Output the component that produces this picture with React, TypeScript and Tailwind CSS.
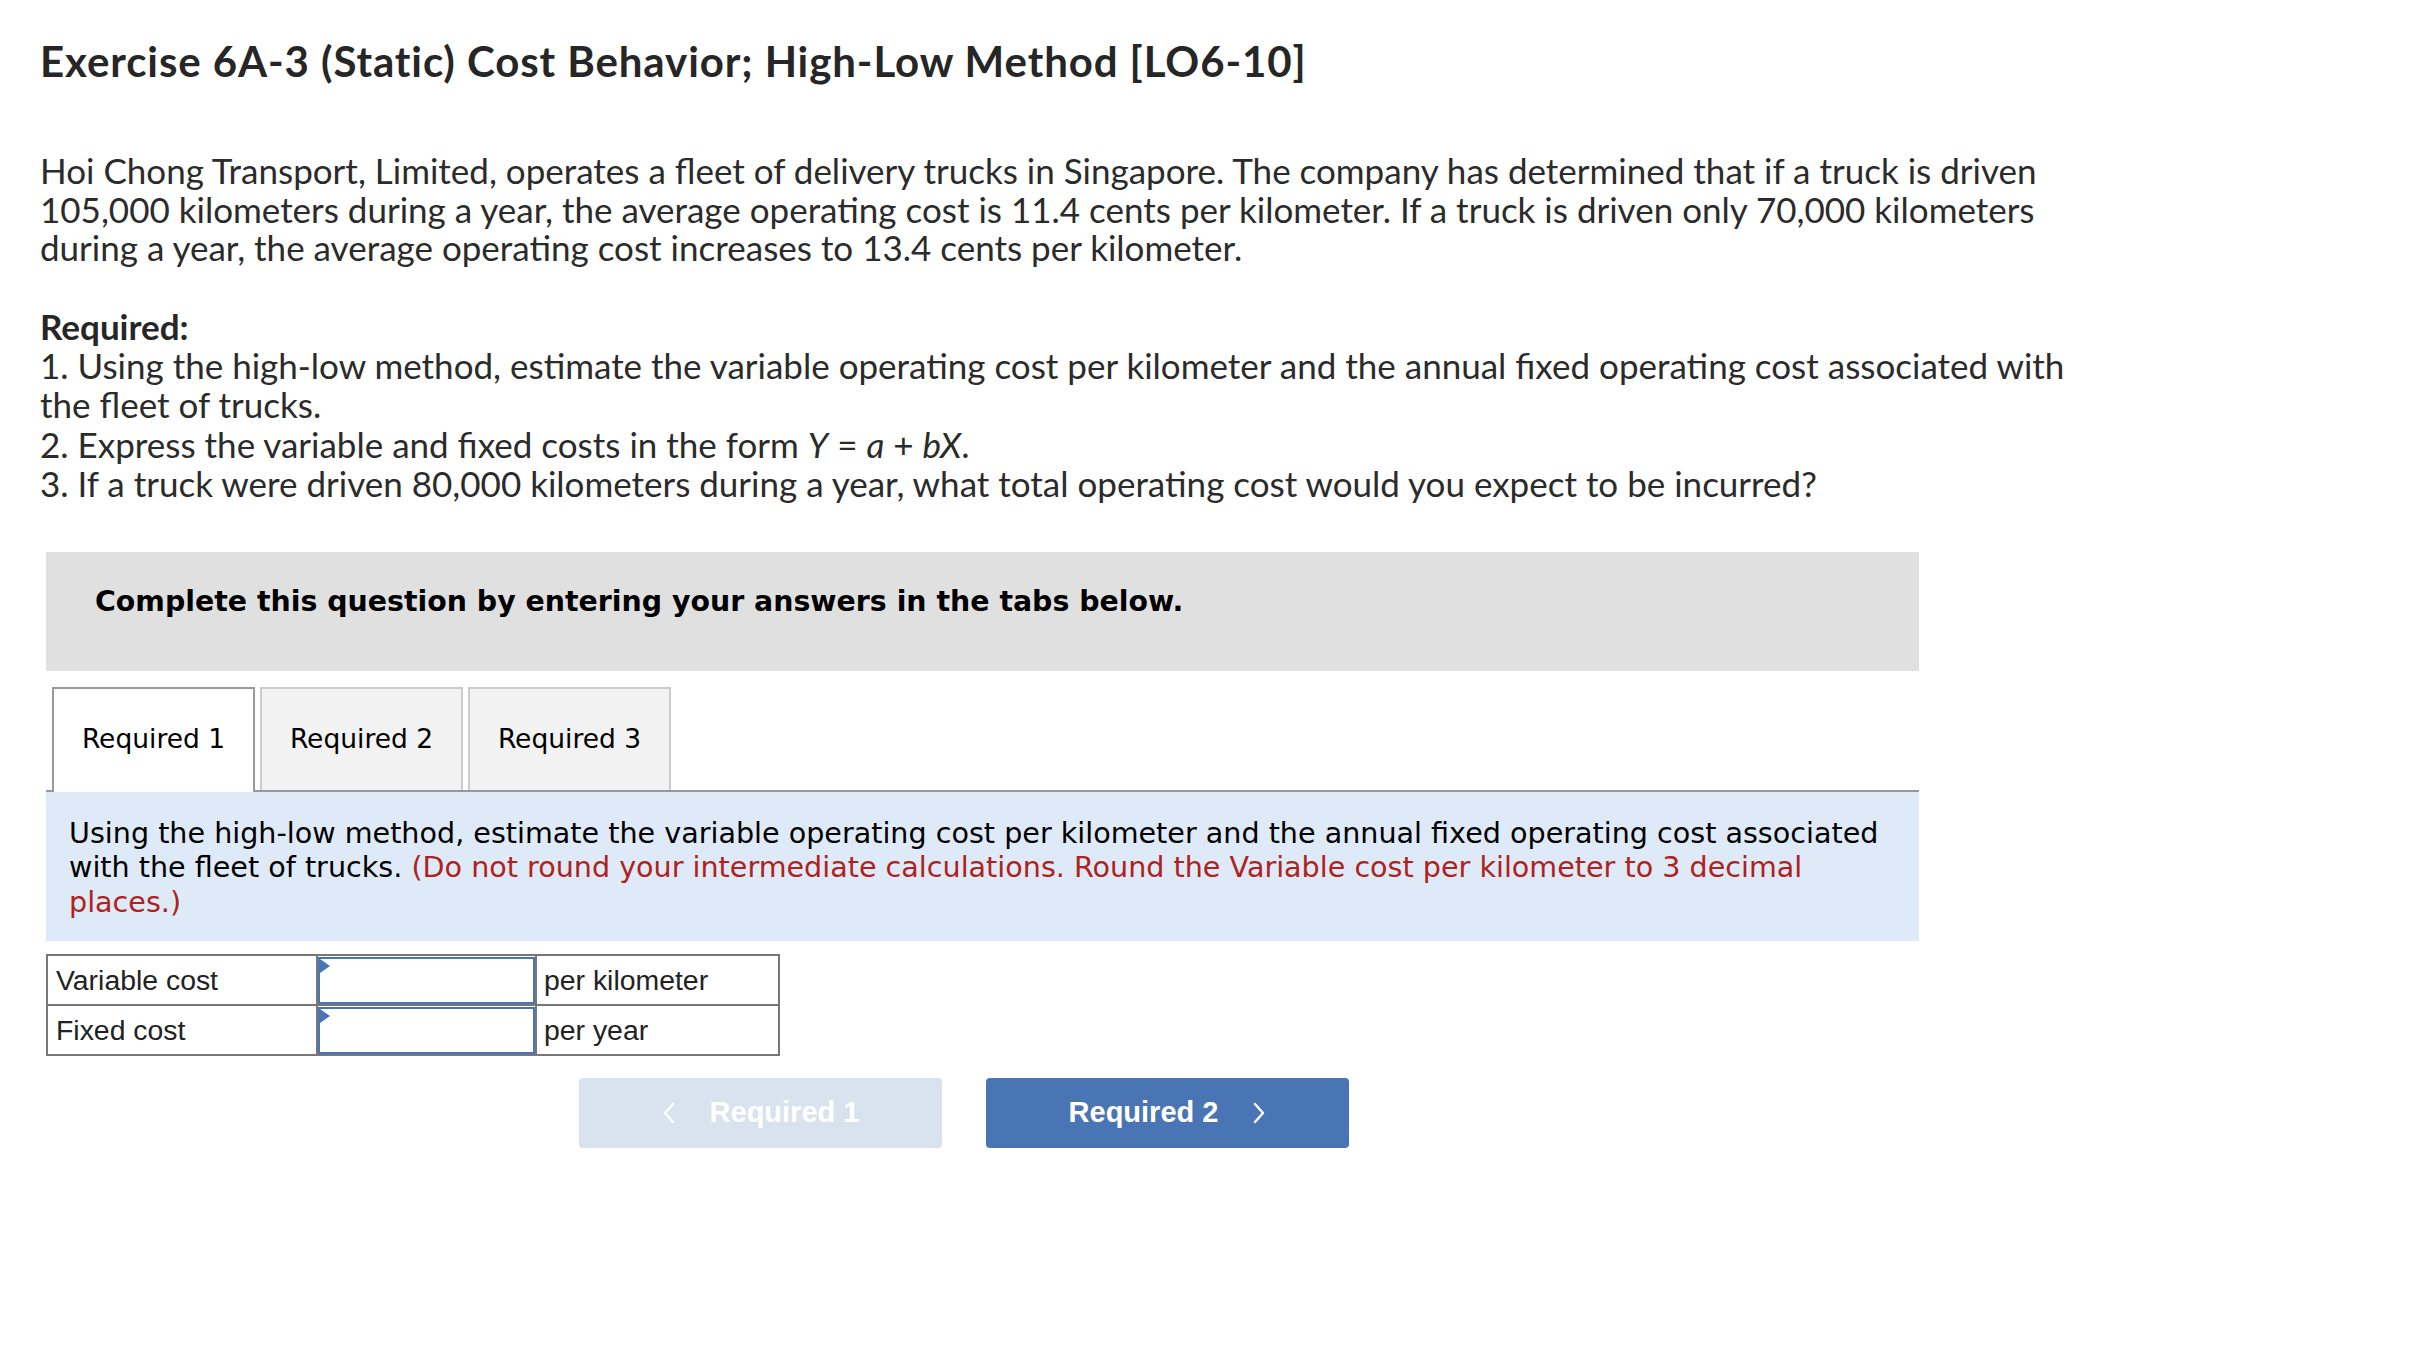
import React from 'react';

const sans = "font-['Lato','Noto_Sans',sans-serif]";

function Tab({ label, active }: { label: string; active?: boolean }) {
  if (active) {
    return (
      <div className="-mb-[2px] flex h-[105px] w-[203px] items-center justify-center border-2 border-b-0 border-[#999999] bg-white pb-[2px] font-['DejaVu_Sans',sans-serif] text-[26.5px] text-black">
        {label}
      </div>
    );
  }
  return (
    <div className="flex h-[103px] w-[203px] items-center justify-center border-2 border-b-0 border-[#cccccc] bg-[#f2f2f2] font-['DejaVu_Sans',sans-serif] text-[26.5px] text-black">
      {label}
    </div>
  );
}

function AnswerInput() {
  return (
    <div className="relative h-[47px] w-full border-2 border-[#4a75b5] bg-white">
      <div className="absolute left-0 top-0 h-0 w-0 border-y-[7px] border-l-[10px] border-y-transparent border-l-[#4a75b5]" />
    </div>
  );
}

function Chevron({ dir }: { dir: 'left' | 'right' }) {
  return (
    <svg width="14" height="22" viewBox="0 0 14 22" fill="none">
      <path
        d={dir === 'left' ? 'M11 2 L3 11 L11 20' : 'M3 2 L11 11 L3 20'}
        stroke="white"
        strokeWidth="2.4"
        strokeLinecap="round"
        strokeLinejoin="round"
      />
    </svg>
  );
}

export default function App() {
  return (
    <div className="min-h-screen bg-white pl-[40px] pt-[37px] text-[#2b2b2b]">
      <h1 className={`${sans} text-[42px] font-bold leading-[48px] tracking-[0.9px] text-[#262626]`}>
        Exercise 6A-3 (Static) Cost Behavior; High-Low Method [LO6-10]
      </h1>

      <p className={`${sans} mt-[66px] text-[35px] leading-[38.5px]`}>
        Hoi Chong Transport, Limited, operates a fleet of delivery trucks in Singapore. The company has determined that if a truck is driven
        <br />
        105,000 kilometers during a year, the average operating cost is 11.4 cents per kilometer. If a truck is driven only 70,000 kilometers
        <br />
        during a year, the average operating cost increases to 13.4 cents per kilometer.
      </p>

      <div className={`${sans} mt-[40px] text-[35px] leading-[39.4px]`}>
        <div className="font-bold text-[#262626]">Required:</div>
        <div>
          1. Using the high-low method, estimate the variable operating cost per kilometer and the annual fixed operating cost associated with
          <br />
          the fleet of trucks.
        </div>
        <div>
          2. Express the variable and fixed costs in the form <i>Y</i> = <i>a</i> + <i>bX</i>.
        </div>
        <div>3. If a truck were driven 80,000 kilometers during a year, what total operating cost would you expect to be incurred?</div>
      </div>

      <div className="ml-[6px] mt-[48px] w-[1873px]">
        <div className="h-[119px] bg-[#e0e0e0] pl-[49px] pt-[35px] font-['DejaVu_Sans',sans-serif] text-[28.4px] font-bold leading-[30px] text-black">
          Complete this question by entering your answers in the tabs below.
        </div>

        <div className="mt-[16px] flex items-end gap-[5px] border-b-2 border-[#999999] pl-[6px]">
          <Tab label="Required 1" active />
          <Tab label="Required 2" />
          <Tab label="Required 3" />
        </div>

        <div className="bg-[#deeaf7] px-[23px] pb-[22px] pt-[24px] font-['DejaVu_Sans',sans-serif] text-[28.6px] leading-[34.5px] text-black">
          Using the high-low method, estimate the variable operating cost per kilometer and the annual fixed operating cost associated
          <br />
          with the fleet of trucks.{' '}
          <span className="text-[#b0211d]">
            (Do not round your intermediate calculations. Round the Variable cost per kilometer to 3 decimal
            <br />
            places.)
          </span>
        </div>

        <table className="mt-[13px] border-collapse font-['Liberation_Sans',Arial,sans-serif] text-[28.4px] text-[#222222]">
          <tbody>
            <tr className="h-[50px]">
              <td className="w-[270px] border-2 border-[#777777] pl-[8px]">Variable cost</td>
              <td className="w-[219px] border-2 border-[#777777] p-0">
                <AnswerInput />
              </td>
              <td className="w-[243px] border-2 border-[#777777] pl-[7px]">per kilometer</td>
            </tr>
            <tr className="h-[50px]">
              <td className="border-2 border-[#777777] pl-[8px]">Fixed cost</td>
              <td className="border-2 border-[#777777] p-0">
                <AnswerInput />
              </td>
              <td className="border-2 border-[#777777] pl-[7px]">per year</td>
            </tr>
          </tbody>
        </table>

        <div className="ml-[533px] mt-[22px] flex gap-[44px] font-['Liberation_Sans',Arial,sans-serif] text-[29px] font-bold text-white">
          <button className="flex h-[70px] w-[363px] items-center justify-center gap-[34px] rounded-[4px] bg-[#d9e3f0]">
            <Chevron dir="left" />
            <span>Required 1</span>
          </button>
          <button className="flex h-[70px] w-[363px] items-center justify-center gap-[34px] rounded-[4px] bg-[#4a75b5]">
            <span>Required 2</span>
            <Chevron dir="right" />
          </button>
        </div>
      </div>
    </div>
  );
}
